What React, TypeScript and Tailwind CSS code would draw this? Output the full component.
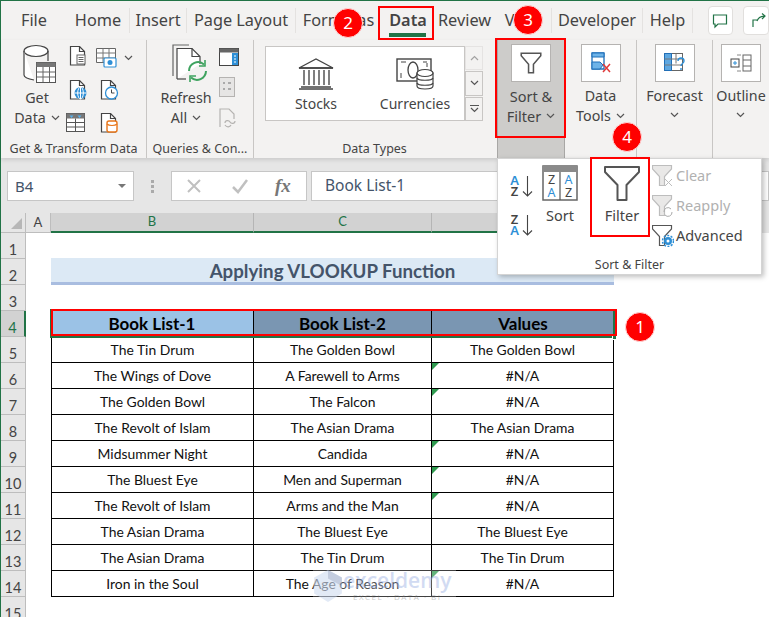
import type { ReactNode } from "react";

const ui = "font-['Noto_Sans','Open_Sans',sans-serif]";
const cal = "font-['Lato','Noto_Sans',sans-serif]";

const tabs: [string, string][] = [
  ["File", "w-[66px]"],
  ["Home", "w-[63px] border-r border-[#e4e2e0]"],
  ["Insert", "w-[57px] border-r border-[#e4e2e0]"],
  ["Page Layout", "w-[109px] border-r border-[#e4e2e0]"],
  ["Formulas", "w-[85px]"],
  ["Data", "w-[54px] font-semibold"],
  ["Review", "w-[59px]"],
  ["View", "w-[58px] border-r border-[#e4e2e0]"],
  ["Developer", "w-[91px] border-r border-[#e4e2e0]"],
  ["Help", "w-[50px] border-r border-[#e4e2e0]"],
];

const rows = [
  ["The Tin Drum", "The Golden Bowl", "The Golden Bowl", false],
  ["The Wings of Dove", "A Farewell to Arms", "#N/A", true],
  ["The Golden Bowl", "The Falcon", "#N/A", true],
  ["The Revolt of Islam", "The Asian Drama", "The Asian Drama", false],
  ["Midsummer Night", "Candida", "#N/A", true],
  ["The Bluest Eye", "Men and Superman", "#N/A", true],
  ["The Revolt of Islam", "Arms and the Man", "#N/A", true],
  ["The Asian Drama", "The Bluest Eye", "The Bluest Eye", false],
  ["The Asian Drama", "The Tin Drum", "The Tin Drum", false],
  ["Iron in the Soul", "The Age of Reason", "#N/A", true],
] as const;

function Chevron({ className = "" }: { className?: string }) {
  return (
    <svg width="9" height="6" viewBox="0 0 9 6" className={className}>
      <path d="M1 1l3.5 3.5L8 1" fill="none" stroke="#555" strokeWidth="1.2" />
    </svg>
  );
}

function Doc({ c = "#444", children }: { c?: string; children?: ReactNode }) {
  return (
    <svg width="20" height="20" viewBox="0 0 20 20">
      <path d="M2.5 19V.5h9l5 5V19z" fill="#fff" stroke={c} strokeWidth="1.2" />
      <path d="M11.5.5v5h5" fill="none" stroke={c} strokeWidth="1.2" />
      {children}
    </svg>
  );
}

function GetDataIcon() {
  return (
    <svg width="36" height="40" viewBox="0 0 36 40">
      <ellipse cx="14" cy="7" rx="12" ry="5.5" fill="#fff" stroke="#444" strokeWidth="1.2" />
      <path d="M2 7v24c0 2.5 4 4 10 5M26 7v10" fill="#fff" stroke="#444" strokeWidth="1.2" />
      <rect x="14.5" y="18.5" width="19" height="20" fill="#fff" stroke="#555" />
      <rect x="14.5" y="18.5" width="19" height="4.5" fill="#777" />
      <path d="M21 23v15M27.5 23v15M15 28h18M15 33h18" stroke="#666" />
    </svg>
  );
}

function SmallGrid() {
  return (
    <div className="ml-[3px] grid w-[70px] grid-cols-[28px_42px] gap-y-[9px] pt-[6px]">
      <Doc>
        <rect x="9" y="9" width="8" height="9" fill="#fff" stroke="#666" />
        <path d="M10.5 11.5h5M10.5 13.5h5M10.5 15.5h5" stroke="#666" />
      </Doc>
      <div className="flex items-center gap-[6px]">
        <svg width="22" height="20" viewBox="0 0 22 20">
          <path d="M.5.5h19v14H.5z" fill="#fff" stroke="#666" />
          <path d="M.5 5h19M7 .5v14M13 .5v14M.5 10h19" stroke="#777" />
          <rect x="8" y="10" width="12" height="9" rx="1" fill="#fff" stroke="#2e8fd6" strokeWidth="1.2" />
          <circle cx="14" cy="14.5" r="2.5" fill="#2e8fd6" />
        </svg>
        <Chevron />
      </div>
      <Doc>
        <circle cx="12.5" cy="13" r="6" fill="#2e8fd6" />
        <path d="M6.5 13h12M12.5 7v12" stroke="#fff" />
        <ellipse cx="12.5" cy="13" rx="2.8" ry="6" fill="none" stroke="#fff" />
      </Doc>
      <div className="pl-[3px]">
        <Doc>
          <circle cx="12.5" cy="13" r="6" fill="#fff" stroke="#2e8fd6" strokeWidth="1.3" />
          <path d="M12.5 9.5V13h3" fill="none" stroke="#444" />
        </Doc>
      </div>
      <svg width="20" height="20" viewBox="0 0 20 20" className="-ml-[2px]">
        <rect x=".5" y=".5" width="18" height="18" fill="#fff" stroke="#555" />
        <rect x=".5" y=".5" width="18" height="5" fill="#777" />
        <path d="M3.5 2.5h4l-2 2.5zM11.5 2.5h4l-2 2.5z" fill="#57b3f0" />
        <path d="M.5 9.5h18M.5 14h18M9.5 5.5v13" stroke="#555" />
      </svg>
      <div className="pl-[3px]">
        <Doc>
          <rect x="8" y="8" width="10" height="11" rx="2" fill="#fff" stroke="#e8761a" strokeWidth="1.4" />
          <path d="M8 11c2 2 8 2 10 0" fill="none" stroke="#e8761a" strokeWidth="1.2" />
        </Doc>
      </div>
    </div>
  );
}

function RefreshIcon() {
  return (
    <svg width="36" height="40" viewBox="0 0 36 40">
      <path d="M1 32V1h16" fill="none" stroke="#666" strokeWidth="1.2" />
      <path d="M5 35V4.500h15l8 8V20" fill="#fff" stroke="#444" strokeWidth="1.2" />
      <path d="M5 35h9" stroke="#444" strokeWidth="1.2" />
      <path d="M20 4.500v8h8" fill="none" stroke="#444" strokeWidth="1.2" />
      <path d="M17 27a9 9 0 0 1 15-6.500M34 27a9 9 0 0 1-15 6.500" fill="none" stroke="#3ea35f" strokeWidth="2" />
      <path d="M33 16v6h-6M18 38v-6h6" fill="none" stroke="#3ea35f" strokeWidth="1.6" />
    </svg>
  );
}

function StocksIcon() {
  return (
    <svg width="36" height="32" viewBox="0 0 36 32">
      <path d="M1 10L18 1l17 9z" fill="none" stroke="#444" strokeWidth="1.3" />
      <path d="M1 10h34M3 29h30M1 31h34" stroke="#444" strokeWidth="1.3" />
      <path d="M6 12v15M11 12v15M16 12v15M21 12v15M26 12v15M31 12v15" stroke="#555" strokeWidth="1.5" />
    </svg>
  );
}

function CurrenciesIcon() {
  return (
    <svg width="38" height="32" viewBox="0 0 38 32">
      <rect x="1" y="1" width="34" height="22" fill="#fff" stroke="#444" strokeWidth="1.4" />
      <path d="M5 4h5M31 4h-4M5 20V15M31 9V5" stroke="#444" />
      <ellipse cx="17" cy="12" rx="5" ry="8" fill="none" stroke="#444" strokeWidth="1.3" />
      <path d="M21 15v13c0 2 3.500 3 8 3s8-1 8-3V15z" fill="#fff" stroke="#444" strokeWidth="1.2" />
      <ellipse cx="29" cy="15" rx="8" ry="3.500" fill="#fff" stroke="#444" strokeWidth="1.2" />
      <path d="M21 20c1 3 15 3 16 0M21 25c1 3 15 3 16 0" fill="none" stroke="#444" strokeWidth="1.2" />
    </svg>
  );
}

function Funnel({ size = 22 }: { size?: number }) {
  return (
    <svg width={size} height={size} viewBox="0 0 36 36">
      <path d="M1 1h34v5L22.500 19v15h-9V19L1 6z" fill="#fff" stroke="#555" strokeWidth="2" strokeLinejoin="round" />
    </svg>
  );
}

function SmallFunnel({ c, children }: { c: string; children?: ReactNode }) {
  return (
    <svg width="22" height="22" viewBox="0 0 22 22">
      <path d="M.5.500h19v3.500l-7 7.500v9h-5v-9L.5 4z" fill={c === "#555" ? "#fff" : "#e9e8e7"} stroke={c} strokeWidth="1.2" />
      {children}
    </svg>
  );
}

function SortAz({ flip = false }: { flip?: boolean }) {
  return (
    <div className="flex h-[24px] items-center gap-[2px] text-[13px] leading-[11px] font-semibold">
      <div className="flex w-[11px] flex-col items-center">
        <span className={flip ? "text-[#444]" : "text-[#2e8fd6]"}>{flip ? "Z" : "A"}</span>
        <span className={flip ? "text-[#2e8fd6]" : "text-[#444]"}>{flip ? "A" : "Z"}</span>
      </div>
      <svg width="11" height="22" viewBox="0 0 11 22">
        <path d="M5.500 1v20M1 16.500l4.500 4.500 4.500-4.500" fill="none" stroke="#444" strokeWidth="1.100" />
      </svg>
    </div>
  );
}

function SortBox() {
  return (
    <svg width="36" height="36" viewBox="0 0 36 36">
      <rect x="1" y="1" width="34" height="34" fill="#fff" stroke="#666" strokeWidth="1.500" />
      <rect x="1" y="1" width="34" height="6" fill="#8a8a8a" />
      <path d="M18 7v28" stroke="#555" strokeWidth="1.200" />
      <g fontSize="12.500" fontFamily="Noto Sans, sans-serif" textAnchor="middle">
        <text x="9.500" y="19" fill="#444">Z</text>
        <text x="9.500" y="32" fill="#2e8fd6">A</text>
        <text x="26.500" y="19" fill="#2e8fd6">A</text>
        <text x="26.500" y="32" fill="#444">Z</text>
      </g>
    </svg>
  );
}

function IconBox({ children }: { children: ReactNode }) {
  return <div className="flex h-[38px] w-[40px] items-center justify-center border border-[#b5b3b1] bg-white">{children}</div>;
}

function Group({ label, className, children }: { label?: string; className: string; children: ReactNode }) {
  return (
    <div className={`flex shrink-0 flex-col ${className}`}>
      <div className="flex h-[98px]">{children}</div>
      <div className="h-[20px] pt-[1px] text-center text-[12.500px] leading-[19px] whitespace-nowrap text-[#444]">{label}</div>
    </div>
  );
}

function TallButton({
  icon,
  lines,
  chevronBelow,
  textClass = "",
}: {
  icon: ReactNode;
  lines: string[];
  chevronBelow?: boolean;
  textClass?: string;
}) {
  return (
    <div className="flex w-full flex-col items-center pt-[4px] text-[14.300px] leading-[20px] text-[#444]">
      {icon}
      <div className={`mt-[4px] flex flex-col items-center whitespace-nowrap ${textClass}`}>
        {lines.map((line, i) => (
          <div key={line} className="flex items-center gap-[5px]">
            {line}
            {!chevronBelow && i === lines.length - 1 && <Chevron />}
          </div>
        ))}
        {chevronBelow && <Chevron className="mt-[6px]" />}
      </div>
    </div>
  );
}

function Badge({ n, className }: { n: number; className: string }) {
  return (
    <div className={`absolute flex h-[30px] w-[30px] items-center justify-center rounded-full border border-[#ffd9d9] bg-[#ff0000] text-[17px] text-white ${ui} ${className}`}>
      {n}
    </div>
  );
}

export default function App() {
  return (
    <div className={`relative h-[617px] w-[769px] overflow-hidden bg-white ${ui}`}>
      <div className="flex h-full flex-col border-t border-l border-[#217346]">
        {/* tabs */}
        <div className="flex h-[39px] shrink-0 bg-[#f3f2f1] text-[16.300px] text-[#444]">
          {tabs.map(([name, cls]) => (
            <div key={name} className={`relative my-[7px] flex h-[25px] shrink-0 items-center justify-center ${cls}`}>
              {name}
              {name === "Data" && <div className="absolute top-[25px] left-[8px] h-[4px] w-[37px] bg-[#217346]" />}
            </div>
          ))}
          <div className="ml-[15px] flex h-[29px] w-[32px] items-center justify-center self-center rounded-[4px] border border-[#e1dfdd] bg-white">
            <svg width="16" height="16" viewBox="0 0 16 16">
              <path d="M1.500 2h13v9H6l-3 3v-3H1.500z" fill="none" stroke="#217346" strokeWidth="1.200" />
            </svg>
          </div>
          <div className="ml-[10px] flex h-[29px] w-[32px] items-center justify-start self-center rounded-[4px] border border-[#e1dfdd] bg-white pl-[8px]">
            <svg width="14" height="16" viewBox="0 0 14 16">
              <path d="M1 14V7h5M5 8c1-3 4-5 8-5M10 .5L13 3l-3 3" fill="none" stroke="#217346" strokeWidth="1.200" />
            </svg>
          </div>
        </div>

        {/* ribbon */}
        <div className="z-10 flex h-[118px] shrink-0 overflow-hidden bg-[#f3f2f1] shadow-[0_2px_4px_rgba(0,0,0,0.12)]">
          <div className="flex h-full">
            <Group label="Get & Transform Data" className="w-[146px] border-r border-[#c8c6c4]">
              <div className="ml-[14px] w-[50px]">
                <TallButton icon={<GetDataIcon />} lines={["Get", "Data"]} textClass="-ml-[6px]" />
              </div>
              <SmallGrid />
            </Group>
            <Group label="Queries & Con..." className="w-[107px] border-r border-[#c8c6c4]">
              <div className="ml-[16px] w-[54px]">
                <TallButton icon={<RefreshIcon />} lines={["Refresh", "All"]} textClass="-ml-[8px]" />
              </div>
              <div className="ml-[2px] flex flex-col gap-[11px] pt-[8px]">
                <svg width="20" height="18" viewBox="0 0 20 18">
                  <rect x=".5" y=".5" width="19" height="17" fill="#fff" stroke="#444" />
                  <rect x=".5" y=".5" width="19" height="4" fill="#666" />
                  <rect x="13" y="5" width="6" height="12" fill="#2e8fd6" />
                  <path d="M15 8h2M15 11h2M15 14h2" stroke="#fff" />
                </svg>
                <svg width="16" height="20" viewBox="0 0 16 20">
                  <rect x=".5" y=".5" width="15" height="19" fill="#e6e5e4" stroke="#b5b3b1" />
                  <path d="M4 6h2M4 12h2M9 6h3M9 12h3" stroke="#aaa" strokeWidth="2" />
                </svg>
                <svg width="18" height="20" viewBox="0 0 18 20">
                  <path d="M1 19V1h9l5 5v5" fill="none" stroke="#b5b3b1" strokeWidth="1.200" />
                  <path d="M6 15c0-3 4-3 5-1s5 2 5-1M6 17c2 3 5 2 6 0" fill="none" stroke="#b5b3b1" strokeWidth="1.200" />
                </svg>
              </div>
            </Group>
            <Group label="Data Types" className="w-[243px] pr-[2px]">
              <div className="mt-[6px] ml-[11px] flex h-[75px] w-[200px] border border-[#c8c6c4] bg-white">
                <div className="flex w-[100px] flex-col items-center pt-[11px] text-[14px] text-[#444]">
                  <StocksIcon />
                  <div className="mt-[3px]">Stocks</div>
                </div>
                <div className="flex w-[98px] flex-col items-center pt-[11px] text-[14px] text-[#444]">
                  <CurrenciesIcon />
                  <div className="mt-[3px]">Currencies</div>
                </div>
              </div>
              <div className="mt-[6px] flex h-[75px] w-[18px] flex-col gap-[1px]">
                <div className="flex flex-1 items-center justify-center border border-[#d8d6d4] bg-[#f3f2f1] opacity-50">
                  <Chevron className="rotate-180" />
                </div>
                <div className="flex flex-1 items-center justify-center border border-[#c8c6c4]">
                  <Chevron />
                </div>
                <div className="flex flex-1 flex-col items-center justify-center gap-[1px] border border-[#c8c6c4]">
                  <div className="h-px w-[9px] bg-[#555]" />
                  <Chevron />
                </div>
              </div>
            </Group>
            <div className="flex h-full w-[68px] shrink-0 flex-col border-x border-[#a8a7a5] bg-[#cdccca]">
              <div className="flex h-[98px] justify-center">
                <div className="flex flex-col items-center pt-[4px] text-[14.500px] leading-[20px] text-[#444]">
                  <IconBox>
                    <svg width="22" height="22" viewBox="0 0 36 36">
                      <path d="M2 2h32v4L22 20v14h-8V20L2 6z" fill="#fff" stroke="#555" strokeWidth="2.500" />
                    </svg>
                  </IconBox>
                  <div className="mt-[4px]">Sort &amp;</div>
                  <div className="flex items-center gap-[5px]">
                    Filter
                    <Chevron />
                  </div>
                </div>
              </div>
            </div>
            <div className="w-[72px] shrink-0 border-r border-[#c8c6c4]">
              <TallButton
                icon={
                  <IconBox>
                    <svg width="20" height="22" viewBox="0 0 20 22">
                      <path d="M1 1h12v16H1z" fill="#fff" stroke="#1f6fb8" strokeWidth="1.300" />
                      <path d="M1 1h12v4H1zM1 10h8l3 3-3 4H1z" fill="#6db3e8" stroke="#1f6fb8" strokeWidth="1" />
                      <path d="M12 12l7 8M19 12l-7 8" stroke="#e03a3a" strokeWidth="1.500" />
                    </svg>
                  </IconBox>
                }
                lines={["Data", "Tools"]}
              />
            </div>
            <div className="w-[76px] shrink-0 border-r border-[#c8c6c4]">
              <TallButton
                icon={
                  <IconBox>
                    <svg width="22" height="20" viewBox="0 0 22 20">
                      <rect x=".5" y=".5" width="18" height="17" fill="#fff" stroke="#666" />
                      <path d="M.5.500h7v17h-7z" fill="#5ea7e0" stroke="#1f6fb8" />
                      <path d="M.5 6h18M.5 12h18M12 .5v10" stroke="#777" />
                      <path d="M14 8c0-4 6-4 6 0 0 2.500-3 2.500-3 5M17 15v2" fill="none" stroke="#2e8fd6" strokeWidth="1.400" />
                    </svg>
                  </IconBox>
                }
                lines={["Forecast"]}
                chevronBelow
              />
            </div>
            <div className="w-[56px] shrink-0">
              <TallButton
                icon={
                  <IconBox>
                    <svg width="22" height="18" viewBox="0 0 22 18">
                      <rect x="1" y="5" width="8" height="8" fill="#fff" stroke="#444" />
                      <path d="M3 9h4M5 7v4" stroke="#2e8fd6" />
                      <path d="M7 1h4M7 17h4" stroke="#888" />
                      <rect x="13" y="1" width="8" height="16" fill="#fff" stroke="#666" />
                      <path d="M13 6h8M13 12h8" stroke="#666" />
                    </svg>
                  </IconBox>
                }
                lines={["Outline"]}
                chevronBelow
              />
            </div>
          </div>
        </div>

        {/* formula bar */}
        <div className="flex h-[55px] shrink-0 items-start bg-[#e6e6e6] pt-[13px] pl-[6px]">
          <div className="flex h-[30px] w-[127px] items-center justify-between border border-[#c6c6c6] bg-white px-[7px] text-[15px] text-[#44546a]">
            B4
            <span className="h-0 w-0 border-x-[4px] border-t-[4px] border-x-transparent border-t-[#777]" />
          </div>
          <div className="flex h-[30px] w-[37px] flex-col items-center justify-center gap-[2px]">
            <span className="h-[3px] w-[3px] bg-[#aaa]" />
            <span className="h-[3px] w-[3px] bg-[#aaa]" />
            <span className="h-[3px] w-[3px] bg-[#aaa]" />
          </div>
          <div className="flex h-[30px] w-[136px] items-center border border-[#c6c6c6] bg-white">
            <svg width="16" height="16" viewBox="0 0 16 16" className="ml-[14px]">
              <path d="M2 2l12 12M14 2L2 14" stroke="#c0c0c0" strokeWidth="2" />
            </svg>
            <svg width="18" height="16" viewBox="0 0 18 16" className="ml-[29px]">
              <path d="M2 9l5 5L16 2" fill="none" stroke="#c0c0c0" strokeWidth="2.500" />
            </svg>
            <span className="ml-[26px] font-['Liberation_Serif',serif] text-[19px] font-bold text-[#777] italic">fx</span>
          </div>
          <div className="ml-[4px] flex h-[30px] flex-1 items-center border border-[#c6c6c6] bg-white pl-[13px] text-[15.500px] text-[#44546a]">
            Book List-1
          </div>
        </div>

        {/* column headers */}
        <div className={`flex h-[20px] shrink-0 text-[13px] ${cal}`}>
          <div className="flex w-[25px] items-end justify-end border-r border-b border-[#bdbdbd] bg-[#e6e6e6] p-[3px]">
            <span className="h-0 w-0 border-b-[11px] border-l-[11px] border-b-[#b7b7b7] border-l-transparent" />
          </div>
          <div className="flex w-[25px] items-center justify-center border-r border-b border-[#bdbdbd] bg-[#e6e6e6] text-[#444]">A</div>
          <div className="flex w-[203px] items-center justify-center border-r border-b-2 border-[#b5b5b5] border-b-[#217346] bg-[#d2d2d2] text-[#217346]">B</div>
          <div className="flex w-[178px] items-center justify-center border-r border-b-2 border-[#b5b5b5] border-b-[#217346] bg-[#d2d2d2] text-[#217346]">C</div>
          <div className="flex w-[182px] items-center justify-center border-b-2 border-[#b5b5b5] border-b-[#217346] bg-[#d2d2d2] text-[#217346]">D</div>
          <div className="flex-1 bg-[#e6e6e6]" />
        </div>

        {/* sheet */}
        <div className={`flex-1 overflow-hidden text-[13.900px] text-[#111] ${cal}`}>
          <SheetRow n={1} />
          <SheetRow n={2}>
            <div className="-mt-px flex h-[27px] w-[563px] items-center justify-center border-b-[3px] border-[#a9bde0] bg-[#dce9f5] pt-[2px] text-[18.700px] font-bold text-[#44546a]">
              Applying VLOOKUP Function
            </div>
          </SheetRow>
          <SheetRow n={3} />
          <SheetRow n={4} active>
            <div className="flex h-full text-[17px] font-bold text-black">
              <div className="flex w-[203px] items-center justify-center border-r border-black bg-[#9bc2e6]">Book List-1</div>
              <div className="flex w-[178px] items-center justify-center border-r border-black bg-[#7a96b2]">Book List-2</div>
              <div className="flex w-[182px] items-center justify-center bg-[#7a96b2]">Values</div>
            </div>
          </SheetRow>
          {rows.map(([a, b, c, warn], i) => (
            <SheetRow key={i} n={i + 5}>
              <div className="flex h-full border-b border-black">
                <div className="flex w-[203px] items-center justify-center border-r border-l border-black pt-[2px]">{a}</div>
                <div className="flex w-[178px] items-center justify-center border-r border-black pt-[2px]">{b}</div>
                <div className="relative flex w-[182px] items-center justify-center border-r border-black pt-[2px]">
                  {warn && (
                    <span className="absolute top-0 left-0 h-0 w-0 border-t-[7px] border-r-[7px] border-t-[#2f9a4f] border-r-transparent" />
                  )}
                  {c}
                </div>
              </div>
            </SheetRow>
          ))}
          <SheetRow n={15} />
        </div>
      </div>

      {/* sort & filter dropdown */}
      <div className="absolute top-[158px] left-[497px] z-20 flex h-[117px] w-[265px] flex-col border border-[#d4d4d4] bg-white text-[14.500px] text-[#444] shadow-[2px_2px_5px_rgba(0,0,0,0.25)]">
        <div className="flex h-[95px]">
          <div className="ml-[11px] flex w-[24px] flex-col gap-[15px] pt-[15px]">
            <SortAz />
            <SortAz flip />
          </div>
          <div className="ml-[9px] flex w-[36px] flex-col items-center pt-[6px]">
            <SortBox />
            <div className="mt-[4px]">Sort</div>
          </div>
          <div className="ml-[14px] flex w-[60px] flex-col items-center pt-[7px]">
            <Funnel size={36} />
            <div className="mt-[3px]">Filter</div>
          </div>
          <div className="flex flex-col gap-[8px] pt-[6px]">
            <div className="flex items-center gap-[2px] text-[#b1b1b1]">
              <SmallFunnel c="#bdbdbd">
                <path d="M13 14l7 7M20 14l-7 7" stroke="#bdbdbd" />
              </SmallFunnel>
              Clear
            </div>
            <div className="flex items-center gap-[2px] text-[#b1b1b1]">
              <SmallFunnel c="#bdbdbd">
                <path d="M12 17a4 4 0 0 1 7-3M20 17a4 4 0 0 1-7 3" fill="none" stroke="#aaa" />
              </SmallFunnel>
              Reapply
            </div>
            <div className="flex items-center gap-[2px]">
              <SmallFunnel c="#555">
                <circle cx="16" cy="16" r="4" fill="#2e8fd6" />
                <circle cx="16" cy="16" r="5.500" fill="none" stroke="#2e8fd6" strokeWidth="1.500" strokeDasharray="2 1.500" />
                <circle cx="16" cy="16" r="1.500" fill="#fff" />
              </SmallFunnel>
              Advanced
            </div>
          </div>
        </div>
        <div className="pt-[3px] text-center text-[12.500px] leading-[18px]">Sort &amp; Filter</div>
      </div>

      {/* selection of row 4 */}
      <div className="absolute top-[309px] left-[50px] z-20 h-[29px] w-[565px] border-2 border-[#217346]" />
      <div className="absolute top-[335px] left-[612px] z-20 h-[5px] w-[5px] border border-white bg-[#217346]" />

      {/* callouts */}
      <div className="absolute top-[6px] left-[378px] z-30 h-[34px] w-[56px] border-2 border-[#ff0000]" />
      <div className="absolute top-[38px] left-[495px] z-30 h-[100px] w-[71px] border-2 border-[#ff0000]" />
      <div className="absolute top-[157px] left-[590px] z-30 h-[80px] w-[60px] border-2 border-[#ff0000]" />
      <div className="absolute top-[309px] left-[51px] z-30 h-[27px] w-[566px] border-2 border-[#ff0000]" />
      <Badge n={2} className="top-[8px] left-[333px] z-30" />
      <Badge n={3} className="top-[5px] left-[513px] z-30" />
      <Badge n={4} className="top-[122px] left-[612px] z-30" />
      <Badge n={1} className="top-[312px] left-[625px] z-30" />

      {/* watermark */}
      <div className="absolute top-[570px] left-[313px] z-10 flex h-[32px] w-[143px] items-start bg-white/25">
        <svg width="30" height="32" viewBox="0 0 28 30" className="opacity-50">
          <path d="M14 0l13 7v15l-13 8-13-8V7z" fill="#c7d6ef" />
          <path d="M14 0l13 7v8l-13-7z" fill="#8b9dc0" />
        </svg>
        <div className="flex flex-col items-center font-['Open_Sans',sans-serif] leading-none opacity-40">
          <span className="text-[21px] font-semibold text-[#8fa6e0]">exceldemy</span>
          <span className="mt-[2px] text-[8px] tracking-[1.500px] text-[#777]">EXCEL · DATA · BI</span>
        </div>
      </div>
    </div>
  );
}

function SheetRow({ n, active, children }: { n: number; active?: boolean; children?: ReactNode }) {
  return (
    <div className="flex h-[26px]">
      <div
        className={`flex w-[25px] shrink-0 items-end justify-center border-b border-[#bdbdbd] text-[14.500px] leading-[17px] ${
          active ? "border-r-2 border-r-[#217346] bg-[#d2d2d2] text-[#217346]" : "border-r bg-[#e6e6e6] text-[#444]"
        }`}
      >
        {n}
      </div>
      <div className="w-[25px] shrink-0" />
      {children}
    </div>
  );
}
